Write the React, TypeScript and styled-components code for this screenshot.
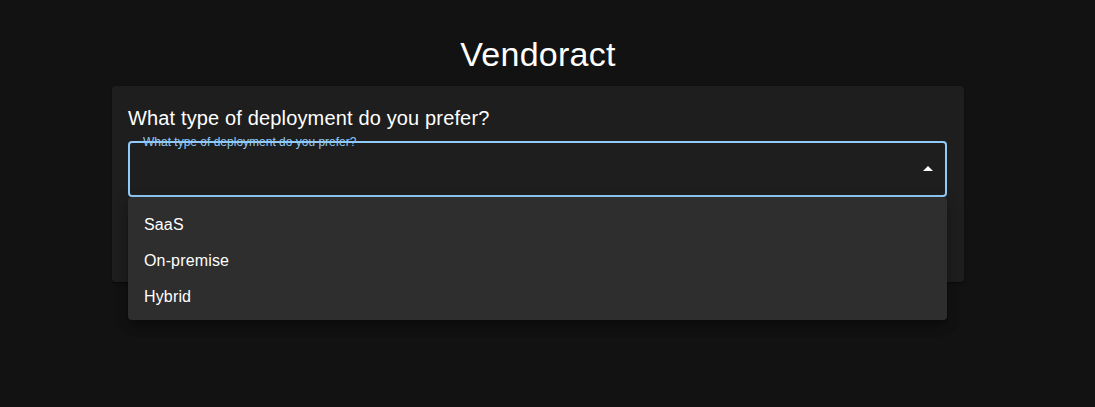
import React, {useState} from "react";
import styled, {createGlobalStyle} from "styled-components";

const GlobalStyle = createGlobalStyle`
  html, body {
    margin: 0;
    padding: 0;
    background: #121212;
    color: #ffffff;
    font-family: "Liberation Sans", Arial, sans-serif;
  }
`

const options = ["SaaS", "On-premise", "Hybrid"]

export default function App() {
    const [value, setValue] = useState("")
    const [open, setOpen] = useState(true)

    return (
        <Page>
            <GlobalStyle/>
            <Title>Vendoract</Title>
            <CardStyled>
                <Question>What type of deployment do you prefer?</Question>
                <SelectWrapper>
                    <SelectBox $focused={open} onClick={() => setOpen((o) => !o)}>
                        <FloatingLabel>What type of deployment do you prefer?</FloatingLabel>
                        <SelectValue>{value}</SelectValue>
                        <Arrow $open={open} viewBox="0 0 24 24">
                            <path d="M7 10l5 5 5-5z" fill="currentColor"/>
                        </Arrow>
                    </SelectBox>
                    {open && (
                        <Menu>
                            {options.map((option) => (
                                <MenuItem key={option} onClick={() => {
                                    setValue(option)
                                    setOpen(false)
                                }}>{option}</MenuItem>
                            ))}
                        </Menu>
                    )}
                </SelectWrapper>
            </CardStyled>
        </Page>
    )
}

const Page = styled.div`
  width: 1076px;
  min-height: 407px;
  display: flex;
  flex-direction: column;
  align-items: center;
  padding-top: 34px;
  box-sizing: border-box;
`

const Title = styled.h1`
  margin: 0 0 12px;
  font-size: 34px;
  font-weight: 400;
  line-height: 40px;
  letter-spacing: 0.25px;
  color: #ffffff;
`

const CardStyled = styled.div`
  width: 852px;
  box-sizing: border-box;
  padding: 16px 16px 85px;
  background: #1e1e1e;
  border-radius: 4px;
  box-shadow: 0 2px 1px -1px rgba(0, 0, 0, 0.2), 0 1px 1px 0 rgba(0, 0, 0, 0.14), 0 1px 3px 0 rgba(0, 0, 0, 0.12);
`

const Question = styled.h6`
  margin: 0 0 7px;
  font-size: 20px;
  font-weight: 400;
  line-height: 32px;
  letter-spacing: 0.15px;
`

const SelectWrapper = styled.div`
  position: relative;
  width: 819px;
`

const SelectBox = styled.div<{ $focused: boolean }>`
  position: relative;
  height: 56px;
  box-sizing: border-box;
  border: 2px solid ${({$focused}) => $focused ? "#90caf9" : "rgba(255, 255, 255, 0.23)"};
  border-radius: 4px;
  cursor: pointer;
  display: flex;
  align-items: center;
  padding: 0 32px 0 13px;
`

const FloatingLabel = styled.label`
  position: absolute;
  left: 13px;
  top: -8px;
  font-size: 12px;
  line-height: 14px;
  color: #90caf9;
  white-space: nowrap;
`

const SelectValue = styled.span`
  font-size: 16px;
`

const Arrow = styled.svg<{ $open: boolean }>`
  position: absolute;
  right: 5px;
  top: 50%;
  width: 24px;
  height: 24px;
  margin-top: -12px;
  color: #ffffff;
  transform: ${({$open}) => $open ? "rotate(180deg)" : "none"};
`

const Menu = styled.ul`
  position: absolute;
  left: 0;
  right: 0;
  top: 56px;
  margin: 0;
  padding: 9px 0 6px;
  list-style: none;
  background: #2e2e2e;
  border-radius: 4px;
  box-shadow: 0 5px 5px -3px rgba(0, 0, 0, 0.2), 0 8px 10px 1px rgba(0, 0, 0, 0.14), 0 3px 14px 2px rgba(0, 0, 0, 0.12);
  z-index: 10;
`

const MenuItem = styled.li`
  height: 36px;
  display: flex;
  align-items: center;
  padding: 2px 16px 0;
  box-sizing: border-box;
  font-size: 16px;
  letter-spacing: 0.15px;
  cursor: pointer;

  &:hover {
    background: rgba(255, 255, 255, 0.08);
  }
`
